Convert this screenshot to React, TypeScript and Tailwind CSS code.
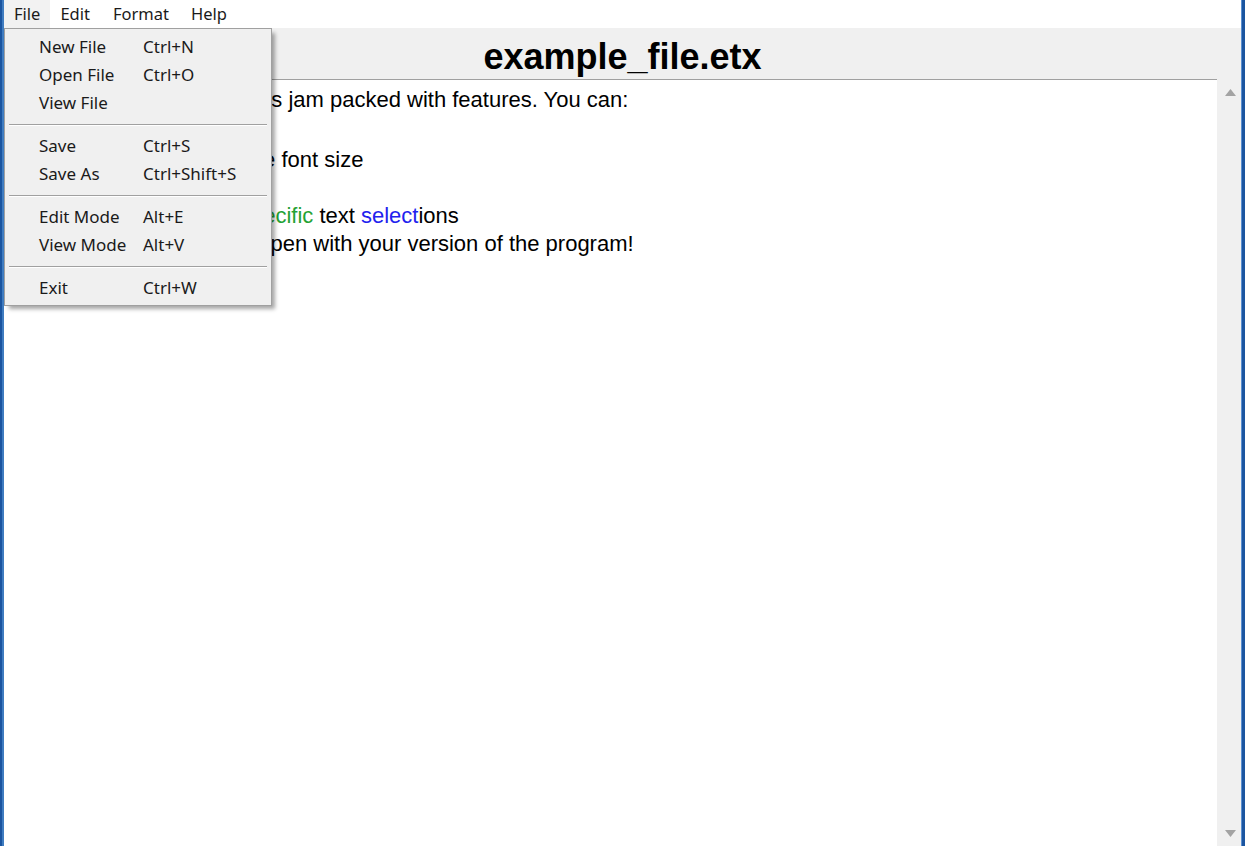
import React from 'react';

const menuItems: (string[] | null)[] = [
  ['New File', 'Ctrl+N'],
  ['Open File', 'Ctrl+O'],
  ['View File', ''],
  null,
  ['Save', 'Ctrl+S'],
  ['Save As', 'Ctrl+Shift+S'],
  null,
  ['Edit Mode', 'Alt+E'],
  ['View Mode', 'Alt+V'],
  null,
  ['Exit', 'Ctrl+W'],
];

const FileMenu = () => (
  <div className="absolute left-[4px] top-[28px] w-[268px] bg-[#f0f0f0] border border-[#a0a0a0] pt-[4px] pb-[3px] shadow-[4px_4px_4px_-1px_rgba(0,0,0,0.35)] font-['Noto_Sans',sans-serif] text-[17px] text-[#1a1a1a]">
    {menuItems.map((item, i) =>
      item ? (
        <div key={i} className="flex items-center h-[28px] pl-[34px]">
          <span className="w-[104px]">{item[0]}</span>
          <span>{item[1]}</span>
        </div>
      ) : (
        <div key={i} className="h-[15px] flex items-center px-[4px]">
          <div className="w-full border-t border-[#a0a0a0] border-b border-b-white" />
        </div>
      )
    )}
  </div>
);

export default function App() {
  return (
    <div className="relative w-[1245px] h-[846px] flex bg-[#f0f0f0] overflow-hidden">
      <div className="w-[2px] bg-[#1b55a0]" />
      <div className="w-[2px] bg-[#3f7cc0]" />

      <div className="flex-1 flex flex-col">
        <div className="h-[28px] bg-white flex items-center font-['Noto_Sans',sans-serif] text-[16.5px] text-[#1a1a1a]">
          <span className="h-full flex items-center pl-[10px] pr-[10px] bg-[#f2f2f2]">File</span>
          <span className="pl-[10px] pr-[12px]">Edit</span>
          <span className="pl-[11px] pr-[11px]">Format</span>
          <span className="pl-[11px]">Help</span>
        </div>

        <div className="h-[51px] pt-[11px] flex justify-center">
          <h1 className="h-[36px] leading-[36px] text-[36px] font-bold text-black font-['Liberation_Sans',Arial,sans-serif]">
            example_file.etx
          </h1>
        </div>

        <div className="flex-1 flex">
          <div className="flex-1 bg-white border-t border-[#a0a0a0] mr-[2px] pl-[6px] pt-[6px] font-['Liberation_Sans',Arial,sans-serif] text-[22px] text-black">
            <div className="leading-[28px]">This Extended Text Editor is jam packed with features. You can:</div>
            <div className="leading-[32px]">- Write and edit text</div>
            <div className="leading-[28px]">- Increase Or Decrease the font size</div>
            <div className="leading-[28px]">- Bold and italicize text</div>
            <div className="leading-[28px]">
              - change the colours of <span className="text-[#25a234]">specific</span> text{' '}
              <span className="text-[#2222ee]">select</span>ions
            </div>
            <div className="leading-[28px]">- Save Files that will only open with your version of the program!</div>
          </div>
          <div className="w-[22px] flex flex-col items-center justify-between pt-[10px] pb-[9px]">
            <svg width="11" height="7" viewBox="0 0 11 7">
              <path d="M5.5 0 L11 7 L0 7 Z" fill="#a3a3a3" />
            </svg>
            <svg width="11" height="7" viewBox="0 0 11 7">
              <path d="M0 0 L11 0 L5.5 7 Z" fill="#a3a3a3" />
            </svg>
          </div>
        </div>
      </div>

      <div className="w-[1px] bg-[#5a8fd0]" />
      <div className="w-[3px] bg-[#1b55a0]" />

      <FileMenu />
    </div>
  );
}
